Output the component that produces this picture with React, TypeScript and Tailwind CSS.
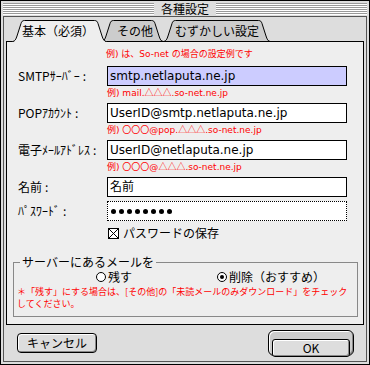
import React from "react";

const JP = "font-['Noto_Sans_CJK_JP','Noto_Sans_CJK_SC',sans-serif]";
const LAT = "font-['DejaVu_Sans','Noto_Sans_CJK_JP',sans-serif]";

function Tab({ label, w, selected, box, text }: { label: string; w: number; selected?: boolean; box: string; text: string }) {
  const edge = `M0.5,21.5 C3,21.5 4,19 5,16 L9,3.5 C9.6,1.5 10.5,0.5 12.5,0.5 L${w - 12.5},0.5 C${w - 10.5},0.5 ${w - 9.6},1.5 ${w - 9},3.5 L${w - 5},16 C${w - 4},19 ${w - 3},21.5 ${w - 0.5},21.5`;
  const fill = selected ? `${edge} L${w - 0.5},22 L0.5,22 Z` : `${edge} Z`;
  return (
    <div className={`relative h-[22px] shrink-0 ${box}`}>
      <svg className="absolute inset-0" width={w} height={22}>
        <path d={fill} fill={selected ? "#eeeeee" : "#cccccc"} />
        <path d={edge} fill="none" stroke="#000" strokeWidth={1} />
        {!selected && <path d={`M0,21.5 H${w}`} stroke="#000" strokeWidth={1} />}
      </svg>
      <span className={`relative block pt-[3px] text-[12px] leading-[16px] text-black whitespace-nowrap ${text}`}>{label}</span>
    </div>
  );
}

function Label({ text }: { text: string }) {
  return (
    <div className="w-[100px] shrink-0 pl-[11px] text-[12px] leading-[14px] text-black whitespace-nowrap">
      {text}
      <span className="ml-[3px]">:</span>
    </div>
  );
}

// triangles stay in the CJK face so they keep full width
const Tri = () => <span className={JP}>△△△</span>;

function Field({ label, value, hi, example }: { label: string; value: string; hi?: boolean; example?: React.ReactNode }) {
  return (
    <>
      <div className="flex items-center h-[20px]">
        <Label text={label} />
        <div className={`w-[240px] h-[20px] border border-black flex items-center pl-[2px] text-[12px] leading-[16px] text-black ${LAT} ${hi ? "bg-[#ccccff]" : "bg-white"}`}>
          {value}
        </div>
      </div>
      {example && (
        <div className={`ml-[100px] mt-[1px] mb-[4px] text-[9px] leading-[12px] text-[#ff0000] whitespace-nowrap ${LAT}`}>{example}</div>
      )}
    </>
  );
}

function Radio({ on }: { on?: boolean }) {
  return (
    <div className="w-[10px] h-[10px] rounded-full border border-black bg-white flex items-center justify-center shrink-0">
      {on && <div className="w-[4px] h-[4px] rounded-full bg-black" />}
    </div>
  );
}

const stripes = "flex-1 h-[12px] bg-[repeating-linear-gradient(to_bottom,#999999_0px,#999999_1px,#ffffff_1px,#ffffff_2px)]";

export default function App() {
  return (
    <div className={`w-[370px] h-[365px] ${JP}`}>
      <div className="w-[370px] h-[365px] border border-black bg-[#dddddd] flex flex-col">
        {/* title bar */}
        <div className="h-[15px] px-[2px] flex items-center">
          <div className={stripes} />
          <div className="px-[7px] text-[12px] leading-[15px] text-black">各種設定</div>
          <div className={stripes} />
        </div>

        <div className="flex-1 mx-[2px] mb-[2px] border border-[#555555] bg-[#dddddd] flex flex-col">
          {/* tabs */}
          <div className="relative z-10 flex pt-[3px] pl-[8px]">
            <div className="relative z-30">
              <Tab label="基本（必須）" w={95} selected box="w-[95px]" text="pl-[10px]" />
            </div>
            <div className="relative z-20 -ml-[6px]">
              <Tab label="その他" w={63} box="w-[63px]" text="pl-[16px]" />
            </div>
            <div className="relative z-10 -ml-[1px]">
              <Tab label="むずかしい設定" w={108} box="w-[108px]" text="pl-[12px]" />
            </div>
          </div>

          {/* panel */}
          <div className="h-[284px] mx-[2px] -mt-px border border-black bg-[#eeeeee] flex flex-col">
            <div className={`ml-[99px] mt-[6px] text-[9px] leading-[12px] text-[#ff0000] whitespace-nowrap ${LAT}`}>
              例) は、So-net の場合の設定例です
            </div>
            <div className="mt-[6px] flex flex-col">
              <Field label="SMTPｻｰﾊﾞｰ" value="smtp.netlaputa.ne.jp" hi example={<>例) mail.<Tri />.so-net.ne.jp</>} />
              <Field label="POPｱｶｳﾝﾄ" value="UserID@smtp.netlaputa.ne.jp" example={<>例) 〇〇〇@pop.<Tri />.so-net.ne.jp</>} />
              <Field label="電子ﾒｰﾙｱﾄﾞﾚｽ" value="UserID@netlaputa.ne.jp" example={<>例) 〇〇〇@<Tri />.so-net.ne.jp</>} />
              <Field label="名前" value="名前" />
              <div className="flex items-center h-[20px] mt-[4px]">
                <Label text="ﾊﾟｽﾜｰﾄﾞ" />
                <div className="w-[240px] h-[20px] border border-dotted border-black bg-white flex items-center gap-[3px] pl-[3px]">
                  {[0, 1, 2, 3, 4, 5, 6, 7].map((i) => (
                    <div key={i} className="w-[5px] h-[5px] rounded-full bg-black" />
                  ))}
                </div>
              </div>
            </div>

            {/* save password */}
            <div className="mt-[6px] ml-[101px] flex items-center gap-[4px] h-[12px]">
              <svg width="11" height="11" className="shrink-0">
                <rect x="0.5" y="0.5" width="10" height="10" fill="#fff" stroke="#000" />
                <path d="M1,1 L10,10 M10,1 L1,10" stroke="#000" strokeWidth={1} />
              </svg>
              <span className="text-[12px] leading-[14px] text-black">パスワードの保存</span>
            </div>

            {/* server mail group */}
            <fieldset className="mt-[17px] ml-[6px] w-[345px] border border-[#888888] pb-[6px]">
              <legend className="ml-[6px] px-[2px] text-[12px] leading-[12px] text-black">サーバーにあるメールを</legend>
              <div className="mt-[2px] ml-[82px] flex items-center h-[14px]">
                <div className="w-[121px] flex items-center gap-[2px]">
                  <Radio />
                  <span className="text-[12px] leading-[14px] text-black">残す</span>
                </div>
                <div className="flex items-center gap-[2px]">
                  <Radio on />
                  <span className="text-[12px] leading-[14px] text-black">削除（おすすめ）</span>
                </div>
              </div>
              <div className="mt-[2px] ml-[3px] text-[9px] leading-[12px] text-[#ff0000] whitespace-nowrap">
                ＊「残す」にする場合は、[その他]の「未読メールのみダウンロード」をチェック
                <br />
                してください。
              </div>
            </fieldset>
          </div>

          {/* buttons */}
          <div className="flex-1 flex items-center justify-between pl-[13px] pr-[12px]">
            <button className="w-[80px] h-[20px] border border-black rounded-[4px] bg-[#dddddd] shadow-[inset_1px_1px_0_#ffffff,inset_-1px_-1px_0_#888888] text-[12px] leading-[14px] text-black">
              キャンセル
            </button>
            <div className="w-[86px] h-[26px] border border-black rounded-[6px] p-[3px] bg-[#cccccc] shadow-[inset_1px_1px_0_#ffffff,inset_-1px_-1px_0_#888888]">
              <button className="w-full h-full border border-black rounded-[3px] bg-[#dddddd] shadow-[inset_1px_1px_0_#ffffff,inset_-1px_-1px_0_#888888] text-[12px] leading-[14px] text-black">
                OK
              </button>
            </div>
          </div>
        </div>
      </div>
    </div>
  );
}
